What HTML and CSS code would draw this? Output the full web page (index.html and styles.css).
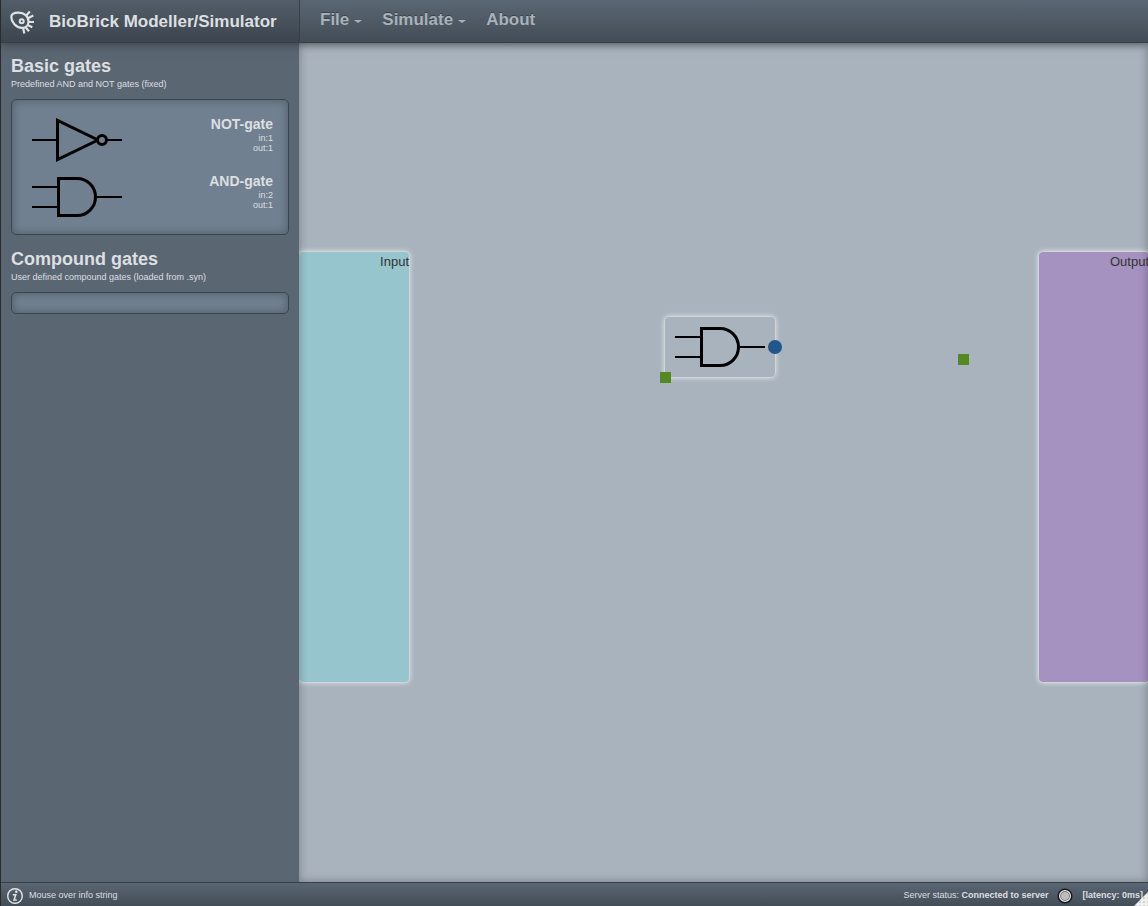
FILE: index.html
```html
<!DOCTYPE html>
<html lang="en">
<head>
<meta charset="utf-8">
<title>BioBrick Modeller/Simulator</title>
<link rel="stylesheet" href="styles.css">
</head>
<body>
<svg class="symbols" aria-hidden="true">
  <symbol id="and-gate" viewBox="0 0 100 50">
    <path d="M5 15H31M5 35H31M70 25H95" fill="none" stroke="#000" stroke-width="2"/>
    <path d="M31.500 6.500H50A18.500 18.500 0 0 1 50 43.500H31.500Z" fill="none" stroke="#000" stroke-width="3"/>
  </symbol>
  <symbol id="not-gate" viewBox="0 0 100 50">
    <path d="M5 25H30M79 25H95" fill="none" stroke="#000" stroke-width="2"/>
    <path d="M30.500 5.300V44.700L71 25Z" fill="none" stroke="#000" stroke-width="3"/>
    <circle cx="75" cy="25" r="4.500" fill="#708090" stroke="#000" stroke-width="3"/>
  </symbol>
</svg>
<div class="app">
  <header class="topbar">
    <div class="brand">
      <svg class="logo" viewBox="0 0 26 26" aria-hidden="true">
        <g fill="none" stroke="#dfe2e4" stroke-width="2.200">
          <path d="M1.300 8C1.300 4.500 4.500 3.600 8.500 3.600C14.500 3.600 18.500 7.500 18.500 12.300C18.500 16.500 15.500 18.900 12 18.900C6 18.900 1.300 13 1.300 8Z"/>
          <circle cx="11.700" cy="12.300" r="2" stroke-width="2"/>
          <path d="M16.300 6.500L19.800 2.600M18 9.300L23.300 6.600M18.500 13H24M17.500 16L22.300 18.300M15.300 18L19 22.300M13 18.500L14.300 24.500" stroke-width="2.200"/>
        </g>
      </svg>
      <h1 class="title">BioBrick Modeller/Simulator</h1>
    </div>
    <nav class="menu">
      <button class="menu-item" type="button">File<span class="caret"></span></button>
      <button class="menu-item" type="button">Simulate<span class="caret"></span></button>
      <button class="menu-item" type="button">About</button>
    </nav>
  </header>
  <div class="workspace">
    <aside class="sidebar">
      <section>
        <h2 class="heading">Basic gates</h2>
        <p class="hint">Predefined AND and NOT gates (fixed)</p>
        <ul class="gates">
          <li class="gate">
            <svg class="gate-icon" aria-hidden="true"><use href="#not-gate"/></svg>
            <div class="gate-info"><h3 class="gate-name">NOT-gate</h3><p>in:1</p><p>out:1</p></div>
          </li>
          <li class="gate">
            <svg class="gate-icon" aria-hidden="true"><use href="#and-gate"/></svg>
            <div class="gate-info"><h3 class="gate-name">AND-gate</h3><p>in:2</p><p>out:1</p></div>
          </li>
        </ul>
      </section>
      <section>
        <h2 class="heading">Compound gates</h2>
        <p class="hint">User defined compound gates (loaded from .syn)</p>
        <ul class="gates gates-empty"></ul>
      </section>
    </aside>
    <main class="canvas">
      <div class="node terminal input">Input</div>
      <div class="node terminal output">Output</div>
      <div class="node and">
        <svg class="gate-icon" aria-hidden="true"><use href="#and-gate"/></svg>
        <span class="endpoint"></span>
        <span class="handle"></span>
      </div>
      <span class="handle loose"></span>
    </main>
  </div>
  <footer class="statusbar">
    <svg class="info-icon" viewBox="0 0 18 18" aria-hidden="true">
      <circle cx="9" cy="9" r="7.300" fill="none" stroke="#e4e6e8" stroke-width="1.400"/>
      <circle cx="10.300" cy="4.800" r="1.300" fill="#e4e6e8"/>
      <path d="M6.800 7.700H9.800L8 13H10.800" fill="none" stroke="#e4e6e8" stroke-width="1.500"/>
    </svg>
    <span class="info">Mouse over info string</span>
    <span>Server status: <strong>Connected to server</strong></span>
    <svg class="led" viewBox="0 0 16 16" aria-hidden="true">
      <circle cx="8" cy="8" r="7.500" fill="#15191d"/>
      <circle cx="8" cy="8" r="5.400" fill="#555" stroke="#e8e8e8" stroke-width="1.300"/>
      <circle cx="8" cy="8" r="4" fill="#bdbdbd"/>
    </svg>
    <strong class="latency">[latency: 0ms]</strong>
    <span class="grip"></span>
  </footer>
</div>
</body>
</html>
```
FILE: styles.css
```css
* { box-sizing: border-box; margin: 0; padding: 0; }
body { font-family: "Liberation Sans", Arial, sans-serif; color: #dddfe1; background: #5b6673; }
.symbols { display: none; }
.app { display: flex; flex-direction: column; height: 100vh; border-left: 1px solid #2b2b2b; overflow: hidden; }
.topbar { display: flex; flex: none; height: 43px; background: linear-gradient(#5a6673, #434d57); border-bottom: 1px solid #363f48; position: relative; z-index: 2; box-shadow: 0 0 10px rgba(0, 0, 0, .5); }
.brand { display: flex; align-items: center; gap: 13px; width: 299px; padding: 1px 0 0 9px; background: linear-gradient(#535e6a, #3c454e); border-right: 1px solid #363f48; }
.logo { width: 26px; height: 26px; }
.title { font-size: 17px; line-height: 20px; }
.menu { display: flex; align-items: center; padding: 0 0 2px 20px; gap: 20px; }
.menu-item { display: flex; align-items: center; gap: 5px; border: 0; background: none; font: bold 17px/20px "Liberation Sans", Arial, sans-serif; color: #a9b2ba; text-shadow: 0 -1px 0 #3a434c; }
.caret { border: 3px solid transparent; border-width: 3px 4px 0; border-top-color: #a9b2ba; margin-top: 3px; }
.workspace { display: flex; flex: 1; min-height: 0; }
.sidebar { flex: none; width: 298px; padding: 12px 10px; background: #5b6673; }
.heading { font-size: 18px; line-height: 22px; }
.hint { font-size: 9px; line-height: 14px; }
.gates { list-style: none; display: flex; flex-direction: column; gap: 7px; margin: 8px 0 13px; padding: 15px 15px 12px; min-height: 22px; background: #708090; border: 1px solid #39444f; border-radius: 5px; box-shadow: inset 0 0 10px rgba(0, 0, 0, .3); }
.gates-empty { padding: 0; }
.gate { display: flex; justify-content: space-between; height: 50px; }
.gate-icon { width: 100px; height: 50px; display: block; }
.gate-info { text-align: right; font-size: 9px; line-height: 10px; }
.gate-name { font-size: 14px; line-height: 18px; }
.canvas { flex: 1; min-width: 0; position: relative; overflow: hidden; background: #a9b3bd; }
.canvas::after { content: ""; position: absolute; inset: 0; box-shadow: inset 0 0 10px rgba(0, 0, 0, .3); pointer-events: none; }
.node { position: absolute; border: 1px solid #d0d5da; border-radius: 5px; box-shadow: 0 0 5px #e0e3e6; }
.terminal { top: 208px; width: 112px; height: 432px; font-size: 13px; line-height: 20px; text-align: right; color: #333; }
.input { left: -1px; background: #97c5cd; }
.output { right: -2px; background: #a592c0; }
.and { left: 365px; top: 273px; width: 112px; height: 62px; padding: 5px; }
.endpoint { position: absolute; right: -7px; top: 23px; width: 14px; height: 14px; border-radius: 50%; background: #225588; }
.handle { position: absolute; left: -5px; bottom: -6px; width: 11px; height: 11px; background: #558822; }
.loose { left: 659px; top: 311px; }
.statusbar { display: flex; flex: none; align-items: center; height: 24px; padding: 1px 5px 0 5px; border-top: 1px solid #363f48; background: linear-gradient(#5a6673, #434d57); font-size: 9px; line-height: 12px; position: relative; z-index: 2; }
.info-icon { width: 18px; height: 18px; margin: 2px 5px 0 0; }
.info { flex: 1; }
.led { width: 16px; height: 16px; margin: 2px 9px 0; }
.grip { position: absolute; right: 0; bottom: 0; width: 14px; height: 14px; background: radial-gradient(circle, #d5d3d0 1px, transparent 1px) 0 0 / 4px 4px, #f2f1f0; clip-path: polygon(100% 0, 100% 100%, 0 100%); }
```
